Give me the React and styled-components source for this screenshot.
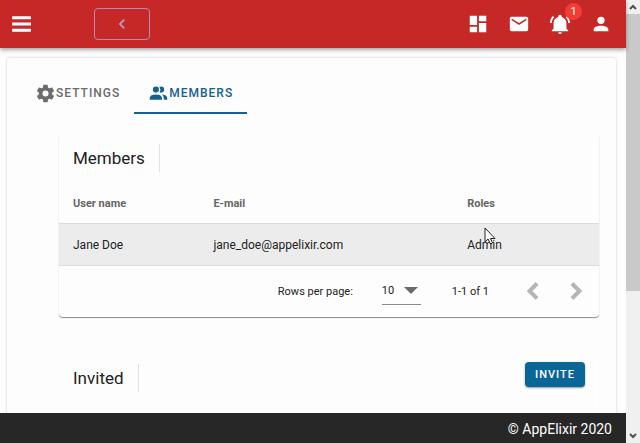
import React from "react";
import styled, { createGlobalStyle } from "styled-components";

const GlobalStyle = createGlobalStyle`
  *, *::before, *::after { box-sizing: border-box; }
  body {
    margin: 0;
    background: #fdfdfd;
    color: #222;
    font-family: Roboto, "Liberation Sans", sans-serif;
    font-size: 12px;
  }
  button, select { font: inherit; color: inherit; }
`;

const paths = {
  menu: "M3,4H21V7H3V4M3,10H21V13H3V10M3,16H21V19H3V16Z",
  left: "M15.41,16.58L10.83,12L15.41,7.41L14,6L8,12L14,18L15.41,16.58Z",
  right: "M8.59,16.58L13.17,12L8.59,7.41L10,6L16,12L10,18L8.59,16.58Z",
  dashboard: "M13,3V9H21V3M13,21H21V11H13M3,21H11V15H3M3,13H11V3H3V13Z",
  mail: "M20,8L12,13L4,8V6L12,11L20,6M20,4H4C2.89,4 2,4.89 2,6V18A2,2 0 0,0 4,20H20A2,2 0 0,0 22,18V6C22,4.89 21.1,4 20,4Z",
  bell: "M21,19V20H3V19L5,17V11C5,7.9 7.03,5.17 10,4.29C10,4.19 10,4.1 10,4A2,2 0 0,1 12,2A2,2 0 0,1 14,4C14,4.1 14,4.19 14,4.29C16.97,5.17 19,7.9 19,11V17L21,19M14,21A2,2 0 0,1 12,23A2,2 0 0,1 10,21M19.75,3.19L18.33,4.61C20.04,6.3 21,8.6 21,11H23C23,8.07 21.84,5.25 19.75,3.19M1,11H3C3,8.6 3.96,6.3 5.67,4.61L4.25,3.19C2.16,5.25 1,8.07 1,11Z",
  account: "M12,4A4,4 0 0,1 16,8A4,4 0 0,1 12,12A4,4 0 0,1 8,8A4,4 0 0,1 12,4M12,14C16.42,14 20,15.79 20,18V20H4V18C4,15.79 7.58,14 12,14Z",
  cog: "M12,15.5A3.5,3.5 0 0,1 8.5,12A3.5,3.5 0 0,1 12,8.5A3.5,3.5 0 0,1 15.5,12A3.5,3.5 0 0,1 12,15.5M19.43,12.97C19.47,12.65 19.5,12.33 19.5,12C19.5,11.67 19.47,11.34 19.43,11L21.54,9.37C21.73,9.22 21.78,8.95 21.66,8.73L19.66,5.27C19.54,5.05 19.27,4.96 19.05,5.05L16.56,6.05C16.04,5.66 15.5,5.32 14.87,5.07L14.5,2.42C14.46,2.18 14.25,2 14,2H10C9.75,2 9.54,2.18 9.5,2.42L9.13,5.07C8.5,5.32 7.96,5.66 7.44,6.05L4.95,5.05C4.73,4.96 4.46,5.05 4.34,5.27L2.34,8.73C2.21,8.95 2.27,9.22 2.46,9.37L4.57,11C4.53,11.34 4.5,11.67 4.5,12C4.5,12.33 4.53,12.65 4.57,12.97L2.46,14.63C2.27,14.78 2.21,15.05 2.34,15.27L4.34,18.73C4.46,18.95 4.73,19.03 4.95,18.95L7.44,17.94C7.96,18.34 8.5,18.68 9.13,18.93L9.5,21.58C9.54,21.82 9.75,22 10,22H14C14.25,22 14.46,21.82 14.5,21.58L14.87,18.93C15.5,18.67 16.04,18.34 16.56,17.94L19.05,18.95C19.27,19.03 19.54,18.95 19.66,18.73L21.66,15.27C21.78,15.05 21.73,14.78 21.54,14.63L19.43,12.97Z",
  people: "M16 17V19H2V17S2 13 9 13 16 17 16 17M12.5 7.5A3.5 3.5 0 1 0 9 11A3.5 3.5 0 0 0 12.5 7.5M15.94 13A5.32 5.32 0 0 1 18 17V19H22V17S22 13.37 15.94 13M15 4A3.39 3.39 0 0 0 13.07 4.59A5 5 0 0 1 13.07 10.41A3.39 3.39 0 0 0 15 11A3.5 3.5 0 0 0 15 4Z",
};

const Glyph = styled.svg`
  display: block;
  flex: none;
  width: ${(p) => p.$size}px;
  height: ${(p) => p.$size}px;
  fill: currentColor;
  stroke: currentColor;
  stroke-width: ${(p) => p.$weight};
`;

function Icon({ name, size = 22, weight = 0 }) {
  return (
    <Glyph viewBox="0 0 24 24" $size={size} $weight={weight} aria-hidden="true">
      <path d={paths[name]} />
    </Glyph>
  );
}

const Window = styled.div`
  display: grid;
  grid-template-columns: minmax(0, 1fr) 14px;
  height: 100vh;
`;

const Page = styled.div`
  display: flex;
  flex-direction: column;
  min-height: 0;
`;

const AppBar = styled.header`
  display: flex;
  align-items: center;
  flex: none;
  height: 48px;
  padding: 0 5px 0 7px;
  background: #c62828;
  color: #fff;
  box-shadow: 0 2px 4px rgba(0, 0, 0, 0.35);
  z-index: 1;
`;

const IconButton = styled.button`
  position: relative;
  display: grid;
  place-items: center;
  width: ${(p) => p.$width || 41}px;
  height: 42px;
  padding: 0;
  border: 0;
  background: none;
  color: ${(p) => p.$color || "inherit"};
`;

const BackButton = styled.button`
  display: grid;
  place-items: center;
  width: 56px;
  height: 32px;
  margin-left: 58px;
  padding: 0;
  border: 1px solid #b48bb4;
  border-radius: 4px;
  background: none;
  color: #b4a3c4;
`;

const Actions = styled.nav`
  display: flex;
  margin-left: auto;
`;

const Badge = styled.span`
  position: absolute;
  top: 0;
  right: -2px;
  width: 17px;
  border-radius: 9px;
  background: #f43c32;
  font-size: 11px;
  line-height: 17px;
  text-align: center;
`;

const Main = styled.main`
  flex: 1;
  min-height: 0;
  padding: 10px 10px 0 7px;
  overflow-y: auto;
  scrollbar-width: none;
`;

const Panel = styled.section`
  padding: 14px 17px 32px 14px;
  border-radius: 3px;
  box-shadow: 0 0 3px rgba(0, 0, 0, 0.2);
`;

const Tabs = styled.div`
  display: flex;
`;

const Tab = styled.button`
  display: flex;
  align-items: center;
  height: 42px;
  padding: 2px 14px 0;
  border: 0;
  border-bottom: 2px solid ${(p) => (p.$active ? "#15608f" : "transparent")};
  background: none;
  color: ${(p) => (p.$active ? "#15608f" : "#6c6c6c")};
  font-size: 12px;
  font-weight: 500;
  letter-spacing: 1px;
`;

const TabBody = styled.div`
  display: flex;
  flex-direction: column;
  gap: 37px;
  padding: 20px 0 0 38px;
`;

const Card = styled.section`
  min-height: ${(p) => p.$minHeight || 0}px;
  border-radius: 4px;
  box-shadow: 0 1px 1px rgba(0, 0, 0, ${(p) => (p.$minHeight ? 0.1 : 0.45)});
`;

const CardHead = styled.div`
  display: flex;
  align-items: center;
  height: 48px;
  padding: 0 14px;
`;

const CardTitle = styled.h2`
  margin: 0;
  padding-right: 14px;
  border-right: 1px solid #e2e2e2;
  font-size: 17px;
  font-weight: 400;
  line-height: 28px;
`;

const InviteButton = styled.button`
  height: 25px;
  margin: 0 0 6px auto;
  padding: 0 10px;
  border: 0;
  border-radius: 4px;
  background: #0b6698;
  color: #fff;
  font-size: 11px;
  font-weight: 500;
  letter-spacing: 1px;
  box-shadow: 0 1px 2px rgba(0, 0, 0, 0.4);
`;

const Table = styled.table`
  width: 100%;
  border-collapse: collapse;
  table-layout: fixed;
  text-align: left;
`;

const HeadCell = styled.th`
  width: ${(p) => p.$width};
  height: 41px;
  padding: 2px 14px 0;
  color: #666;
  font-size: 11px;
  font-weight: 700;
`;

const Cell = styled.td`
  position: relative;
  height: 42px;
  padding: 2px 14px 0;
  border: solid #dcdcdc;
  border-width: 1px 0;
  background: #ececec;
  font-size: 12px;
`;

const Pointer = styled.svg`
  position: absolute;
  top: 3px;
  left: 31px;
  width: 12px;
  height: 18px;
`;

const TableFooter = styled.div`
  display: flex;
  align-items: center;
  justify-content: flex-end;
  height: 51px;
  padding-right: 2px;
  font-size: 11px;
`;

const RowsLabel = styled.label`
  display: flex;
  align-items: center;
  gap: 29px;
`;

const SelectBox = styled.span`
  display: grid;
  grid-template-columns: 1fr 14px;
  align-items: center;
  width: 39px;
  height: 28px;
  padding-right: 3px;
  border-bottom: 1px solid #8a8a8a;
`;

const Select = styled.select`
  grid-area: 1 / 1 / 2 / 3;
  appearance: none;
  width: 100%;
  padding: 0;
  border: 0;
  background: none;
`;

const Caret = styled.svg`
  grid-area: 1 / 2;
  width: 14px;
  height: 7px;
  fill: #6b6b6b;
  pointer-events: none;
`;

const Range = styled.span`
  margin: 0 22px 0 31px;
`;

const Footer = styled.footer`
  flex: none;
  height: 30px;
  padding: 0 14px;
  background: #272727;
  color: #fff;
  font-size: 14px;
  line-height: 32px;
  text-align: right;
`;

const ScrollBar = styled.aside`
  display: grid;
  grid-template-rows: 14px 277fr 138fr 14px;
  background: #f0f0f0;
`;

const ScrollArrow = styled.button`
  display: grid;
  place-items: center;
  padding: 0;
  border: 0;
  background: none;
  color: #505050;
`;

const ScrollThumb = styled.div`
  grid-row: 2;
  background: #c9c9c9;
`;

const Chevron = styled.svg`
  width: 8px;
  height: 6px;
  fill: none;
  stroke: currentColor;
  stroke-width: 2;
`;

const members = [{ name: "Jane Doe", email: "jane_doe@appelixir.com", role: "Admin" }];

export default function App() {
  return (
    <Window>
      <GlobalStyle />
      <Page>
        <AppBar>
          <IconButton $width={29} aria-label="Menu"><Icon name="menu" size={25} /></IconButton>
          <BackButton aria-label="Back"><Icon name="left" size={20} /></BackButton>
          <Actions aria-label="Account">
            <IconButton aria-label="Dashboard"><Icon name="dashboard" /></IconButton>
            <IconButton aria-label="Messages"><Icon name="mail" /></IconButton>
            <IconButton aria-label="Notifications">
              <Icon name="bell" />
              <Badge>1</Badge>
            </IconButton>
            <IconButton aria-label="Profile"><Icon name="account" /></IconButton>
          </Actions>
        </AppBar>
        <Main>
          <Panel>
            <Tabs role="tablist">
              <Tab role="tab" aria-selected="false"><Icon name="cog" size={21} />SETTINGS</Tab>
              <Tab role="tab" aria-selected="true" $active><Icon name="people" size={21} />MEMBERS</Tab>
            </Tabs>
            <TabBody>
              <Card>
                <CardHead><CardTitle>Members</CardTitle></CardHead>
                <Table>
                  <thead>
                    <tr>
                      <HeadCell $width="26%">User name</HeadCell>
                      <HeadCell $width="47%">E-mail</HeadCell>
                      <HeadCell>Roles</HeadCell>
                    </tr>
                  </thead>
                  <tbody>
                    {members.map((m) => (
                      <tr key={m.email}>
                        <Cell>{m.name}</Cell>
                        <Cell>{m.email}</Cell>
                        <Cell>
                          {m.role}
                          <Pointer viewBox="0 0 12 18" aria-hidden="true">
                            <path d="M1 1V15L4 12L6.500 17L8.500 16L6.500 11.500H11Z" fill="#fff" stroke="#222" />
                          </Pointer>
                        </Cell>
                      </tr>
                    ))}
                  </tbody>
                </Table>
                <TableFooter>
                  <RowsLabel>
                    Rows per page:
                    <SelectBox>
                      <Select defaultValue="10">
                        <option>5</option>
                        <option>10</option>
                      </Select>
                      <Caret viewBox="0 0 14 7"><path d="M0 0H14L7 7Z" /></Caret>
                    </SelectBox>
                  </RowsLabel>
                  <Range>1-1 of 1</Range>
                  <IconButton $width={43} $color="#b5b5b5" aria-label="Previous page"><Icon name="left" size={32} weight={1} /></IconButton>
                  <IconButton $width={43} $color="#b5b5b5" aria-label="Next page"><Icon name="right" size={32} weight={1} /></IconButton>
                </TableFooter>
              </Card>
              <Card $minHeight={200}>
                <CardHead>
                  <CardTitle>Invited</CardTitle>
                  <InviteButton>INVITE</InviteButton>
                </CardHead>
              </Card>
            </TabBody>
          </Panel>
        </Main>
        <Footer>© AppElixir 2020</Footer>
      </Page>
      <ScrollBar>
        <ScrollArrow aria-label="Scroll up"><Chevron viewBox="0 0 8 6"><path d="M1 5L4 2L7 5" /></Chevron></ScrollArrow>
        <ScrollThumb />
        <span />
        <ScrollArrow aria-label="Scroll down"><Chevron viewBox="0 0 8 6"><path d="M1 1L4 4L7 1" /></Chevron></ScrollArrow>
      </ScrollBar>
    </Window>
  );
}
